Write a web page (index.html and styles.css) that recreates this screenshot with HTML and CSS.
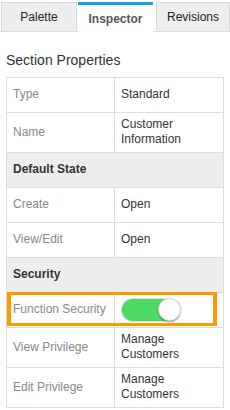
FILE: index.html
```html
<!DOCTYPE html>
<html>
<head>
<meta charset="utf-8">
<link rel="stylesheet" href="styles.css">
</head>
<body>
<div class="tabs">
  <div class="tab tab-palette">Palette</div>
  <div class="tab tab-active">Inspector</div>
  <div class="tab tab-revisions">Revisions</div>
</div>
<div class="panel">
  <h2 class="title">Section Properties</h2>
  <div class="table-wrap">
    <table class="props">
      <colgroup><col class="col-label"><col class="col-value"></colgroup>
      <tr class="row"><td class="label">Type</td><td class="value">Standard</td></tr>
      <tr class="row"><td class="label">Name</td><td class="value">Customer Information</td></tr>
      <tr class="row"><td class="group" colspan="2">Default State</td></tr>
      <tr class="row"><td class="label">Create</td><td class="value">Open</td></tr>
      <tr class="row"><td class="label">View/Edit</td><td class="value">Open</td></tr>
      <tr class="row"><td class="group" colspan="2">Security</td></tr>
      <tr class="row"><td class="label">Function Security</td><td class="value"><div class="switch"><span class="knob"></span></div></td></tr>
      <tr class="row"><td class="label">View Privilege</td><td class="value">Manage Customers</td></tr>
      <tr class="row"><td class="label">Edit Privilege</td><td class="value">Manage Customers</td></tr>
    </table>
    <div class="highlight"></div>
  </div>
</div>
</body>
</html>
```
FILE: styles.css
```css
html, body {
  margin: 0;
  padding: 0;
  background: #fff;
}
body {
  font-family: "Liberation Sans", Arial, sans-serif;
  color: #333;
  width: 230px;
  height: 410px;
  overflow: hidden;
}
.tabs {
  display: flex;
  align-items: flex-end;
  box-sizing: border-box;
  height: 32px;
  padding: 2px 0 0 1px;
  border-bottom: 1px solid #dcdcdc;
}
.tab {
  box-sizing: border-box;
  height: 29px;
  display: flex;
  align-items: center;
  justify-content: center;
  font-size: 12px;
  color: #222;
  background: #eee;
  border: 1px solid #dadada;
  border-bottom: none;
}
.tab-palette {
  width: 76px;
}
.tab-active {
  width: 75px;
  margin-left: 1px;
  height: 30px;
  margin-bottom: -1px;
  background: #fff;
  border: none;
  border-top: 3px solid #18a3e6;
  color: #555;
  font-weight: bold;
  padding-top: 1px;
}
.tab-revisions {
  width: 74px;
  margin-left: 3px;
}
.panel {
  padding: 0 6px 0 6px;
}
.title {
  margin: 18px 0 7px;
  font-size: 14px;
  line-height: 20px;
  font-weight: normal;
  color: #333;
}
.table-wrap {
  position: relative;
  width: 218px;
}
.props {
  width: 218px;
  table-layout: fixed;
  border-collapse: separate;
  border-spacing: 0;
  border-top: 1px solid #ddd;
  border-left: 1px solid #ddd;
  font-size: 12px;
  line-height: 15px;
}
.col-label {
  width: 108px;
}
.row {
  height: 35px;
}
.props td {
  box-sizing: border-box;
  border-right: 1px solid #ddd;
  border-bottom: 1px solid #ddd;
  padding: 4px 6px 5px 6px;
  vertical-align: middle;
}
.props td.group {
  background: #eee;
  font-weight: bold;
  color: #333;
}
.label {
  color: #888;
}
.value {
  color: #333;
}
.switch {
  display: flex;
  justify-content: flex-end;
  align-items: center;
  width: 58px;
  height: 22px;
  margin-left: 1px;
  border-radius: 11px;
  background: #4cd964;
  box-shadow: 0 0 0 1px #dedede;
}
.knob {
  box-sizing: border-box;
  width: 23px;
  height: 23px;
  margin-right: -1px;
  border-radius: 50%;
  background: #fff;
  border: 1px solid #d6d6d6;
  box-shadow: 0 1px 2px rgba(0, 0, 0, 0.3);
}
.highlight {
  position: absolute;
  box-sizing: border-box;
  top: 215px;
  left: 1px;
  width: 210px;
  height: 34px;
  border: 3px solid #ff9900;
  border-left-width: 4px;
  border-right-width: 4px;
}
```
